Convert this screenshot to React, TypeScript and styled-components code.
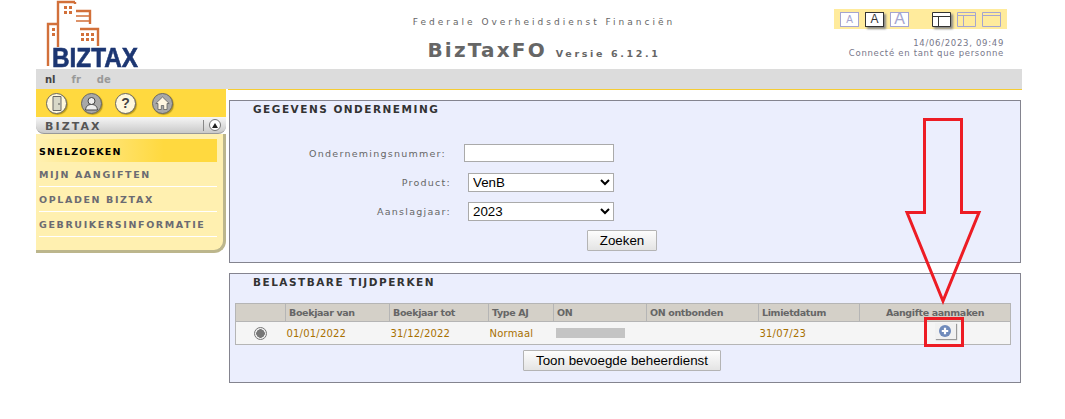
import React from "react";
import styled, { createGlobalStyle } from "styled-components";

const GlobalStyle = createGlobalStyle`
  html, body {
    margin: 0;
    padding: 0;
    background: #fff;
    font-family: "DejaVu Sans", Verdana, sans-serif;
  }
`;

const Page = styled.div`
  position: relative;
  width: 1065px;
  height: 419px;
  overflow: hidden;
`;

const Header = styled.header`
  display: flex;
  width: 1022px;
  height: 69px;
  margin-left: 36px;
`;

const LogoBox = styled.div`
  position: relative;
  width: 190px;
  height: 69px;
`;

const LogoText = styled.span`
  position: absolute;
  left: 16px;
  top: 46px;
  font-family: "Liberation Sans", Arial, sans-serif;
  font-weight: 700;
  font-size: 27px;
  line-height: 24px;
  color: #1c3672;
  -webkit-text-stroke: 0.6px #1c3672;
  transform: scaleX(0.9);
  transform-origin: left top;
`;

const HeaderCenter = styled.div`
  width: 580px;
  padding: 16px 0 0 0;
  margin-left: 28px;
  text-align: center;
`;

const Agency = styled.div`
  font-size: 9px;
  line-height: 12px;
  letter-spacing: 3px;
  color: #666;
`;

const AppTitle = styled.div`
  margin-top: 9px;
  font-size: 20px;
  line-height: 26px;
  font-weight: 700;
  letter-spacing: 2.2px;
  color: #666;

  small {
    margin-left: 9px;
    font-size: 9.5px;
    letter-spacing: 2.65px;
  }
`;

const HeaderRight = styled.div`
  width: 173px;
  padding-top: 9px;
`;

const ToolStrip = styled.div`
  display: flex;
  align-items: center;
  height: 20px;
  box-sizing: border-box;
  padding: 0 0 0 6px;
  background: #ffeb9c;
  gap: 6px;
`;

const FontBox = styled.div<{ $active?: boolean; $size: number }>`
  width: 19px;
  height: 15px;
  box-sizing: border-box;
  display: flex;
  align-items: center;
  justify-content: center;
  background: #fff;
  border: 1px solid ${(p) => (p.$active ? "#333" : "#a5a5d0")};
  box-shadow: ${(p) => (p.$active ? "2px 2px 2px #888" : "none")};
  color: ${(p) => (p.$active ? "#333" : "#a5a5d0")};
  font-family: "Liberation Sans", Arial, sans-serif;
  font-size: ${(p) => p.$size}px;
`;

const LayoutIcon = styled.svg<{ $active?: boolean; $gapLeft?: number }>`
  display: block;
  margin-left: ${(p) => p.$gapLeft ?? 0}px;
  filter: ${(p) => (p.$active ? "drop-shadow(2px 2px 1px #888)" : "none")};
`;

const Stamp = styled.div`
  margin-top: 9px;
  width: 170px;
  text-align: right;
  font-size: 8.5px;
  line-height: 10px;
  letter-spacing: 0.7px;
  color: #77778a;
`;

const LangBar = styled.nav`
  display: flex;
  align-items: center;
  gap: 16px;
  width: 986px;
  height: 20px;
  margin-left: 36px;
  padding-left: 9px;
  box-sizing: border-box;
  background: #dcdcdc;
`;

const Lang = styled.span<{ $active?: boolean }>`
  font-size: 10px;
  font-weight: 700;
  color: ${(p) => (p.$active ? "#444" : "#999")};
`;

const Main = styled.div`
  display: flex;
  margin-left: 36px;
  width: 986px;
`;

const Sidebar = styled.aside`
  flex: none;
  width: 190px;
  margin-right: 2px;
`;

const IconRow = styled.div`
  display: flex;
  align-items: center;
  height: 28px;
  padding-left: 10px;
  background: #ffd93f;
`;

const RoundIcon = styled.div<{ $dark?: boolean; $gap?: number }>`
  width: 21px;
  height: 21px;
  margin-right: ${(p) => p.$gap ?? 14}px;
  border-radius: 50%;
  border: 1.5px solid #666;
  box-sizing: border-box;
  display: flex;
  align-items: center;
  justify-content: center;
  background: ${(p) => (p.$dark ? "#a8a8a8" : "#fff8dc")};
  box-shadow: 1px 1px 1px #b89a20;
  color: #444;
  font-family: "Liberation Sans", Arial, sans-serif;
  font-weight: 700;
  font-size: 14px;
`;

const SideHead = styled.div`
  display: flex;
  align-items: center;
  height: 17px;
  padding: 0 5px 0 9px;
  box-sizing: border-box;
  border-radius: 0 0 8px 8px;
  background: linear-gradient(#f6f6f6, #c9c9c9);
  border-bottom: 1px solid #999;
`;

const SideHeadTitle = styled.span`
  flex: 1;
  padding-top: 3px;
  font-size: 11px;
  font-weight: 700;
  letter-spacing: 2.1px;
  color: #555;
`;

const Collapse = styled.div`
  display: flex;
  align-items: center;
  justify-content: center;
  width: 12px;
  height: 12px;
  margin-left: 5px;
  border-radius: 50%;
  border: 1px solid #777;
  background: #fff;
  box-sizing: border-box;

  &::after {
    content: "";
    border-left: 3.5px solid transparent;
    border-right: 3.5px solid transparent;
    border-bottom: 5px solid #222;
  }
`;

const HeadDivider = styled.span`
  width: 1px;
  height: 11px;
  background: #888;
`;

const SideMenu = styled.div`
  height: 119px;
  padding: 5px 6px 0 3px;
  box-sizing: border-box;
  background: #fff0b0;
  border-right: 3px solid #bcb68c;
  border-bottom: 3px solid #bcb68c;
  border-radius: 0 0 12px 0;
`;

const SideItem = styled.div<{ $active?: boolean; $height: number }>`
  display: flex;
  align-items: center;
  height: ${(p) => p.$height}px;
  padding-top: 1px;
  font-size: 9.5px;
  font-weight: 700;
  letter-spacing: ${(p) => (p.$active ? "1.2px" : "1.62px")};
  white-space: nowrap;
  box-sizing: border-box;
  color: ${(p) => (p.$active ? "#000" : "#6b6b72")};
  background: ${(p) =>
    p.$active ? "linear-gradient(90deg, #fff0b0, #ffd93f 70%)" : "transparent"};
  border-bottom: ${(p) => (p.$active ? "0" : "1px solid #fff")};
`;

const Content = styled.main`
  flex: 1;
  border-top: 1px solid #f5cc33;
  padding: 10px 1px 0;
`;

const Panel = styled.section<{ $height: number }>`
  height: ${(p) => p.$height}px;
  box-sizing: border-box;
  margin-bottom: 10px;
  padding: 2px 5px 0;
  background: #ebeefd;
  border: 1px solid #84848f;
`;

const PanelTitle = styled.h2`
  margin: 0 0 0 18px;
  font-size: 10.5px;
  line-height: 13px;
  font-weight: 700;
  letter-spacing: 1.5px;
  color: #333;
`;

const Form = styled.form`
  display: flex;
  flex-direction: column;
  margin-top: 28px;
`;

const FormRow = styled.div`
  display: flex;
  align-items: center;
  height: 18px;
  margin-bottom: 11px;
`;

const FieldLabel = styled.label<{ $width: number }>`
  width: ${(p) => p.$width}px;
  text-align: right;
  font-size: 9.5px;
  letter-spacing: 1.25px;
  color: #666;
  flex: none;
`;

const TextField = styled.input`
  width: 150px;
  height: 18px;
  margin: 0 0 0 18px;
  padding: 0;
  box-sizing: border-box;
  background: #fff;
  border: 1px solid #aaa;
`;

const SelectBox = styled.select`
  width: 146px;
  height: 19px;
  margin: 0 0 0 17px;
  box-sizing: border-box;
  background: #fff;
  border: 1px solid #aaa;
  border-radius: 0;
  font-family: "Liberation Sans", Arial, sans-serif;
  font-size: 13.33px;
  color: #000;
`;

const PushButton = styled.button<{ $width: number }>`
  display: block;
  width: ${(p) => p.$width}px;
  height: 21px;
  padding: 0;
  box-sizing: border-box;
  background: linear-gradient(#fdfdfd, #e4e4e4);
  border: 1px solid #b4b4b4;
  border-radius: 1px;
  font-family: "Liberation Sans", Arial, sans-serif;
  font-size: 13.33px;
  color: #000;
`;

const ZoekenButton = styled(PushButton)`
  margin-left: 352px;
  margin-top: -1px;
`;

const ToonButton = styled(PushButton)`
  margin: 5px 0 0 288px;
`;

const PeriodTable = styled.table`
  width: 775px;
  margin-top: 14px;
  border-collapse: collapse;
  table-layout: fixed;
`;

const Th = styled.th<{ $center?: boolean }>`
  height: 17px;
  padding: 0 3px;
  background: #d4d0c8;
  border: 1px solid #b5b5b5;
  border-width: 1px 1px 1px 0;
  text-align: ${(p) => (p.$center ? "center" : "left")};
  font-size: 9.5px;
  letter-spacing: -0.35px;
  font-weight: 700;
  color: #666;
  white-space: nowrap;

  &:first-child {
    border-left-width: 1px;
  }
`;

const Td = styled.td`
  height: 22px;
  padding: 0 1px;
  background: #f5f5f5;
  border-top: 1px solid #b5b5b5;
  border-bottom: 1px solid #b5b5b5;
  font-size: 10px;
  letter-spacing: 0.2px;
  color: #a87000;
  white-space: nowrap;

  &:first-child {
    border-left: 1px solid #b5b5b5;
    text-align: center;
  }

  &:last-child {
    border-right: 1px solid #b5b5b5;
  }
`;

const Radio = styled.span`
  display: inline-block;
  width: 13px;
  height: 13px;
  box-sizing: border-box;
  border-radius: 50%;
  border: 1px solid #777;
  background: radial-gradient(circle, #777 0 4px, #f0f0f0 4.5px);
  vertical-align: middle;
`;

const Masked = styled.div`
  width: 69px;
  height: 10px;
  margin-left: 1px;
  background: #c4c4c4;
`;

const AddButton = styled.div`
  display: flex;
  align-items: center;
  justify-content: center;
  width: 21px;
  height: 16px;
  margin: 0 0 5px 74px;
  background: #f1f1f1;
  box-shadow: 1px 1px 1px #999;
`;

const Annotation = styled.svg`
  position: absolute;
  left: 0;
  top: 0;
  pointer-events: none;
`;

const columns = [50, 104, 99, 65, 93, 112, 101, 151];

const App: React.FC = () => {
  return (
    <Page>
      <GlobalStyle />
      <Header>
        <LogoBox>
          <svg width="70" height="69" viewBox="0 0 70 69" style={{ display: "block" }}>
            <g fill="none" stroke="#d2703a" strokeWidth="2.4">
              <path d="M22 24V2H39" />
              <path d="M39 2V4M40 11H54V24" />
              <path d="M44 29H62V46" />
              <path d="M12 66V24H22" />
              <path d="M22 24V47" />
              <path d="M40 16H54M40 21H54" strokeWidth="1.6" />
            </g>
            <g fill="#d2703a">
              <rect x="28" y="6" width="3" height="3" />
              <rect x="33" y="6" width="3" height="3" />
              <rect x="28" y="11" width="3" height="3" />
              <rect x="33" y="11" width="3" height="3" />
              <rect x="45" y="33" width="3" height="3" />
              <rect x="50" y="33" width="3" height="3" />
              <rect x="55" y="33" width="3" height="3" />
              <rect x="45" y="38" width="3" height="3" />
              <rect x="50" y="38" width="3" height="3" />
              <rect x="55" y="38" width="3" height="3" />
              <rect x="16" y="28" width="3" height="3" />
              <rect x="16" y="33" width="3" height="3" />
            </g>
          </svg>
          <LogoText>BIZTAX</LogoText>
        </LogoBox>
        <HeaderCenter>
          <Agency>Federale Overheidsdienst Financiën</Agency>
          <AppTitle>
            BizTaxFO<small>Versie 6.12.1</small>
          </AppTitle>
        </HeaderCenter>
        <HeaderRight>
          <ToolStrip>
            <FontBox $size={10}>A</FontBox>
            <FontBox $active $size={12}>A</FontBox>
            <FontBox $size={16}>A</FontBox>
            <LayoutIcon $active $gapLeft={17} width="19" height="15" viewBox="0 0 19 15">
              <path d="M.5.5h18v14H.5zM.5 4.500h18M6.500 4.500v10" fill="#fff" stroke="#333" />
            </LayoutIcon>
            <LayoutIcon width="19" height="15" viewBox="0 0 19 15">
              <path d="M.5.5h18v14H.5zM.5 3.500h18M6.500 3.500v11" fill="none" stroke="#a5a5d0" />
            </LayoutIcon>
            <LayoutIcon width="19" height="15" viewBox="0 0 19 15">
              <path d="M.5.5h18v14H.5zM.5 3.500h18" fill="none" stroke="#a5a5d0" />
            </LayoutIcon>
          </ToolStrip>
          <Stamp>
            14/06/2023, 09:49
            <br />
            Connecté en tant que personne
          </Stamp>
        </HeaderRight>
      </Header>
      <LangBar>
        <Lang $active>nl</Lang>
        <Lang>fr</Lang>
        <Lang>de</Lang>
      </LangBar>
      <Main>
        <Sidebar>
          <IconRow>
            <RoundIcon $gap={14}>
              <svg width="10" height="15" viewBox="0 0 10 15">
                <path d="M1 .5h8v14H1z" fill="#d8d8c8" stroke="#666" />
                <circle cx="7" cy="8" r=".8" fill="#444" />
              </svg>
            </RoundIcon>
            <RoundIcon $dark $gap={13}>
              <svg width="15" height="15" viewBox="0 0 15 15">
                <circle cx="7.500" cy="5" r="3.500" fill="#eee" stroke="#444" />
                <path d="M1.500 14c.5-4 2.500-5.500 6-5.500s5.500 1.500 6 5.500z" fill="#eee" stroke="#444" />
              </svg>
            </RoundIcon>
            <RoundIcon $gap={16}>?</RoundIcon>
            <RoundIcon $dark>
              <svg width="15" height="14" viewBox="0 0 15 14">
                <path d="M7.500 1 .8 7.500h2.200v6h3.300v-4h2.400v4h3.300v-6h2.200z" fill="#fff6e0" stroke="#555" strokeWidth=".7" />
              </svg>
            </RoundIcon>
          </IconRow>
          <SideHead>
            <SideHeadTitle>BIZTAX</SideHeadTitle>
            <HeadDivider />
            <Collapse />
          </SideHead>
          <SideMenu>
            <SideItem $active $height={23}>SNELZOEKEN</SideItem>
            <SideItem $height={25}>MIJN AANGIFTEN</SideItem>
            <SideItem $height={25}>OPLADEN BIZTAX</SideItem>
            <SideItem $height={25}>GEBRUIKERSINFORMATIE</SideItem>
          </SideMenu>
        </Sidebar>
        <Content>
          <Panel $height={163}>
            <PanelTitle>GEGEVENS ONDERNEMING</PanelTitle>
            <Form>
              <FormRow>
                <FieldLabel $width={211}>Ondernemingsnummer:</FieldLabel>
                <TextField type="text" />
              </FormRow>
              <FormRow>
                <FieldLabel $width={216}>Product:</FieldLabel>
                <SelectBox defaultValue="VenB">
                  <option>VenB</option>
                </SelectBox>
              </FormRow>
              <FormRow>
                <FieldLabel $width={216}>Aanslagjaar:</FieldLabel>
                <SelectBox defaultValue="2023">
                  <option>2023</option>
                </SelectBox>
              </FormRow>
              <ZoekenButton type="button" $width={70}>Zoeken</ZoekenButton>
            </Form>
          </Panel>
          <Panel $height={110}>
            <PanelTitle>BELASTBARE TIJDPERKEN</PanelTitle>
            <PeriodTable>
              <colgroup>
                {columns.map((w, i) => (
                  <col key={i} width={w} />
                ))}
              </colgroup>
              <thead>
                <tr>
                  <Th />
                  <Th>Boekjaar van</Th>
                  <Th>Boekjaar tot</Th>
                  <Th>Type AJ</Th>
                  <Th>ON</Th>
                  <Th>ON ontbonden</Th>
                  <Th>Limietdatum</Th>
                  <Th $center>Aangifte aanmaken</Th>
                </tr>
              </thead>
              <tbody>
                <tr>
                  <Td><Radio /></Td>
                  <Td>01/01/2022</Td>
                  <Td>31/12/2022</Td>
                  <Td>Normaal</Td>
                  <Td><Masked /></Td>
                  <Td />
                  <Td>31/07/23</Td>
                  <Td>
                    <AddButton>
                      <svg width="12" height="12" viewBox="0 0 13 13">
                        <circle cx="6.500" cy="6.500" r="6.500" fill="#6f8abb" />
                        <path d="M6.500 3v7M3 6.500h7" stroke="#fff" strokeWidth="2.400" />
                      </svg>
                    </AddButton>
                  </Td>
                </tr>
              </tbody>
            </PeriodTable>
            <ToonButton type="button" $width={198}>Toon bevoegde beheerdienst</ToonButton>
          </Panel>
        </Content>
      </Main>
      <Annotation width="1065" height="419" viewBox="0 0 1065 419">
        <path
          d="M924.500 119.500H961.500V212.500H979L943 301 907 212.500H924.500Z"
          fill="none"
          stroke="#ed1c24"
          strokeWidth="3"
        />
        <rect x="925.500" y="318.500" width="37" height="27" fill="none" stroke="#ed1c24" strokeWidth="3" />
      </Annotation>
    </Page>
  );
};

export default App;
